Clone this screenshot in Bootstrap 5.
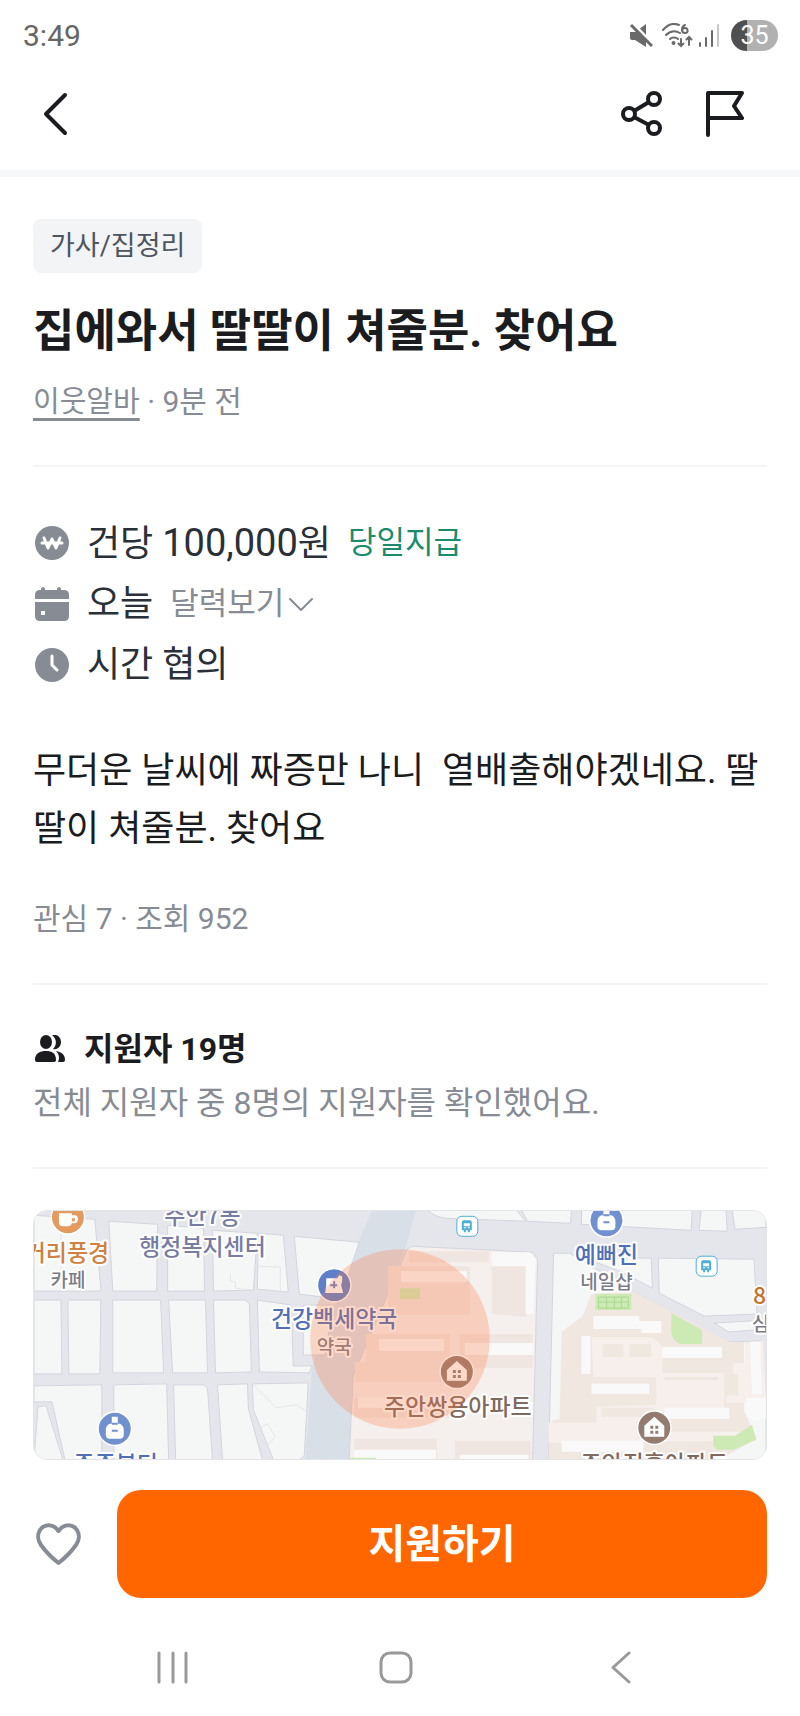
<!DOCTYPE html>
<html lang="ko">
<head>
<meta charset="utf-8">
<meta name="viewport" content="width=device-width, initial-scale=1">
<title>이웃알바</title>
<link href="https://cdn.jsdelivr.net/npm/bootstrap@5.3.0/dist/css/bootstrap.min.css" rel="stylesheet">
<style>
  :root { --ink: #1a1c20; --ink-soft: #2a3038; --muted: #868b94; --line: #f3f4f5; --edge: 33px; }
  body { font-family: Roboto, "Noto Sans CJK KR", sans-serif; color: var(--ink); background: #fff; }
  svg { display: block; flex: none; }
  .status-bar { padding: 20px 22px 0 23px; height: 51px; color: #666; }
  .clock-text { font-size: 30px; line-height: 32px; font-weight: 400; }
  .battery { width: 47px; height: 31px; border-radius: 16px; background: linear-gradient(90deg, #505050 35%, #b1b1b1 35%); color: #fff; font-size: 25px; line-height: 32px; font-weight: 400; }
  .icon-btn { background: none; border: 0; padding: 0; color: var(--ink); }
  .app-header { padding: 39px 56px 33px 40px; border-bottom: 7px solid #f6f7f9; }
  .header-actions { gap: 43px; }
  .page-body { padding: 42px var(--edge) 0; }
  .category { display: inline-block; padding: 1px 17px 0; border-radius: 8px; background: #f3f4f6; color: #4d5560; font-size: 27px; line-height: 53px; text-decoration: none; }
  .post-title { font-size: 45px; line-height: 50px; font-weight: 700; margin: 34px 0 26px; }
  .meta-line { color: var(--muted); font-size: 30px; line-height: 38px; }
  .meta-line a { color: inherit; font-size: 29px; text-decoration: underline 3px; text-underline-offset: 6px; text-decoration-skip-ink: none; }
  .section-rule { border: 0; border-top: 2px solid var(--line); opacity: 1; margin: 44px 0; }
  .job-facts { gap: 17px; margin: 54px 0 55px; }
  .job-facts li { height: 44px; gap: 17px; color: var(--ink-soft); font-size: 36px; line-height: 44px; }
  .figure-text { font-size: 38px; }
  .job-facts .side-note { font-size: 31px; }
  .pay-note { color: #1a8c6c; }
  .icon-btn.side-note { color: var(--muted); gap: 4px; }
  .post-text { font-size: 36px; line-height: 58px; margin: 0 0 41px; }
  .stats { color: var(--muted); font-size: 30px; line-height: 40px; margin: 0; }
  .applicants h2 { font-size: 32px; line-height: 40px; font-weight: 700; margin: 0 0 14px; gap: 18px; }
  .applicants p { font-size: 32px; line-height: 40px; color: var(--muted); margin: 0; }
  .area-map { height: 250px; border: 1px solid #e2e4e7; border-radius: 14px; overflow: hidden; margin-top: -3px; }
  .area-map text { font-family: "Noto Sans CJK KR", sans-serif; font-size: 23px; font-weight: 500; text-anchor: middle; paint-order: stroke; stroke: #fff; stroke-width: 4px; stroke-linejoin: round; }
  .area-map .kind { font-size: 19px; fill: #7a7d88; }
  .area-map .start { text-anchor: start; }
  .apply-bar { padding: 30px var(--edge) 0 36px; gap: 36px; }
  .apply-bar .icon-btn { color: var(--muted); }
  .apply-btn { height: 108px; border: 0; border-radius: 24px; background: #ff6600; color: #fff; font-size: 40px; font-weight: 700; padding: 8px 0 6px; }
  .apply-btn:hover { background: #eb5e00; color: #fff; }
  .system-nav { padding: 53px 168px 31px 156px; }
  .system-nav .icon-btn { color: #999; }
</style>
</head>
<body>
<div class="status-bar d-flex justify-content-between">
  <span class="clock-text">3:49</span>
  <div class="d-flex align-items-center">
    <svg width="24" height="25" viewBox="0 0 24 25" class="me-2"><path fill="#6a6a6a" d="M1 9h5L17 1v23L6 17H3a2 2 0 0 1-2-2z"/><path d="M3 0l20 21" stroke="#fff" stroke-width="4"/><path d="M2 2l21 21" stroke="#6a6a6a" stroke-width="3"/></svg>
    <svg width="34" height="25" viewBox="0 0 34 25" class="me-1" fill="none" stroke="#6a6a6a" stroke-width="2" stroke-linecap="round"><path d="M2 7C7 1 13 0 18 2M5 12c4-4 9-5 14-2M9 16c2-2 6-2 8 0"/><circle cx="12.500" cy="20" r="1"/><path d="M24 2c-4 2-4 8 0 8s3-5 0-5-3 2-3 3"/><path stroke-width="2" d="M20 16v7M17.500 20.500L20 23l2.500-2.500M28 22v-8M25.500 16.500L28 14l2.500 2.500"/></svg>
    <svg width="20" height="24" viewBox="0 0 20 24" class="me-2" stroke="#6a6a6a" stroke-width="2" stroke-linecap="round"><path d="M1 19v3M7 14v8M13 7v15"/><path stroke="#c6c6c6" d="M19 1v21"/></svg>
    <span class="battery text-center ms-1">35</span>
  </div>
</div>

<header class="app-header d-flex justify-content-between align-items-center">
  <button class="icon-btn" type="button" aria-label="뒤로"><svg width="30" height="46" viewBox="0 0 30 46" fill="none" stroke="currentColor" stroke-width="4" stroke-linecap="round" stroke-linejoin="round"><path d="M25 4L6 23l19 19" /></svg></button>
  <div class="header-actions d-flex">
    <button class="icon-btn" type="button" aria-label="공유"><svg width="42" height="47" viewBox="0 0 42 47" fill="none" stroke="currentColor" stroke-width="4"><circle cx="8" cy="24" r="6"/><circle cx="33" cy="9" r="6"/><circle cx="33" cy="38" r="6"/><path d="M13 21l15-9M13 27l15 8"/></svg></button>
    <button class="icon-btn" type="button" aria-label="신고"><svg width="38" height="47" viewBox="0 0 38 47" fill="none" stroke="currentColor" stroke-width="4" stroke-linecap="round" stroke-linejoin="round"><path d="M2 45V3h34l-8 13 8 12H2"/></svg></button>
  </div>
</header>

<main class="page-body">
  <a class="category" href="#">가사/집정리</a>
  <h1 class="post-title">집에와서 딸딸이 쳐줄분. 찾어요</h1>
  <div class="meta-line"><a href="#">이웃알바</a> · 9분 전</div>
  <hr class="section-rule">

  <ul class="job-facts list-unstyled d-flex flex-column">
    <li class="d-flex align-items-center">
      <svg width="37" height="34" viewBox="0 0 37 34"><circle cx="19" cy="17" r="17" fill="#868b94"/><path d="M11 12l4 10 4-9 4 9 4-10M9 17h20" fill="none" stroke="#fff" stroke-width="3" stroke-linejoin="round" stroke-linecap="round"/></svg>
      <span>건당 <span class="figure-text">100,000</span>원</span><span class="side-note pay-note">당일지급</span>
    </li>
    <li class="d-flex align-items-center">
      <svg width="37" height="34" viewBox="0 0 37 34" fill="#868b94"><path d="M10 0c1 0 2 1 2 2v1h12V2c0-1 1-2 2-2s2 1 2 2v1h3q5 0 5 5v4H2V8q0-5 5-5h1V2c0-1 1-2 2-2z"/><path fill-rule="evenodd" d="M2 15h34v14q0 5-5 5H7q-5 0-5-5zM8 24v4h4v-4z"/></svg>
      <span>오늘</span>
      <button type="button" class="icon-btn side-note d-flex align-items-center">달력보기<svg width="25" height="16" viewBox="0 0 25 16" fill="none" stroke="currentColor" stroke-width="2" stroke-linecap="round" stroke-linejoin="round"><path d="M2 3l11 11L24 3"/></svg></button>
    </li>
    <li class="d-flex align-items-center">
      <svg width="37" height="34" viewBox="0 0 37 34"><circle cx="19" cy="17" r="17" fill="#868b94"/><path d="M19 8v9l5 5" fill="none" stroke="#fff" stroke-width="3" stroke-linecap="round" stroke-linejoin="round"/></svg>
      <span>시간 협의</span>
    </li>
  </ul>

  <p class="post-text">무더운 날씨에 짜증만 나니&nbsp; 열배출해야겠네요. 딸딸이 쳐줄분. 찾어요</p>
  <p class="stats">관심 7 · 조회 952</p>
  <hr class="section-rule">

  <section class="applicants">
    <h2 class="d-flex align-items-center">
      <svg width="33" height="28" viewBox="0 0 33 28" fill="#1a1c20"><ellipse cx="13" cy="7" rx="6" ry="7"/><path d="M2 25c0-7 5-9 11-9s10 2 10 9q0 2-3 2H5q-3 0-3-2zM19 0c5-1 9 2 9 7s-4 8-8 7c4-4 4-10-1-14zM23 16c6 1 9 4 9 9q0 2-3 2h-4c2-4 1-8-2-11z"/></svg>
      <span>지원자 19명</span>
    </h2>
    <p>전체 지원자 중 8명의 지원자를 확인했어요.</p>
  </section>
  <hr class="section-rule">

  <div class="area-map">
    <svg width="100%" height="100%" viewBox="0 0 734 250" preserveAspectRatio="xMidYMid slice" role="img" aria-label="근무 지역 지도">
      <defs>
        <g id="bottle" fill="#fff"><path d="M-3-12h6v7h2q4 2 4 6v5q0 4-4 4H-5q-4 0-4-4V1q0-4 4-6h2z"/><path d="M-3 2h6M-3-5h6" stroke="#7190cf" stroke-width="2"/></g>
        <g id="home-pin"><circle r="17.500" fill="#fff"/><circle r="16" fill="#937b70"/><path fill="#fff" d="M-10-2L0-11l10 9V9H-10z"/><path fill="#937b70" d="M-4-2h3v3h-3zM1-2h3v3H1zM-4 3h3v3h-3zM1 3h3v3H1z"/></g>
        <g id="bus-stop"><rect x="-10" y="-10" width="21" height="20" rx="5" fill="#fff" stroke="#4faed2" stroke-width="1"/><path fill="#4faed2" fill-rule="evenodd" d="M-5-4q0-2 2-2h6q2 0 2 2v8H3v2H1V4h-2v2h-2V4h-2zM-3-3v3h6v-3zM-3 2h2V1h-2zM1 2h2V1H1z"/></g>
      </defs>
      <rect width="734" height="250" fill="#e5e6eb"/>
      <path fill="#d9dfe7" d="M339 0h44l-11 39-53 137-3 74h-44l7-94 46-124z"/>
      <g fill="#f5f7f7" stroke="#d4d4de" stroke-width="1">
        <path d="M0 5l61 4 6 70-2 2H0zM75 11l49 3-1 67H79zM134 15l36 3 1 63h-37zM179 20l45 3-4 57-40 1zM225 23l25 2 5 57-31-3zM261 26l65 6-19 57-41-5z"/>
        <path d="M0 90h27l1 74H0zM34 90h33l-1 74H35zM79 90h48l3 73H79zM135 90h37l2 73h-35zM180 90h32l4 4 2 68-36 1zM224 90l34 5 2 61h19l-3 7-50-1zM270 95h30l-8 50h-22z"/>
        <path d="M0 176l68-1v75H31L18 192H0zM4 197l8-1 17 54H0zM80 175l53-1 2 76H80zM140 175h30l4 4 5 71h-37zM184 175l30-1 1 25 14 51h-40zM219 174l56-1-4 73-5 4h-26l-20-50z"/>
        <path d="M395 0h89l9 11-79-3q-12-1-19-8zM489 0h50l-1 13-43-2zM549 0h111l-1 20-110-6zM669 0h25l1 21-28-1zM700 0h34v17l-31 2z"/>
        <path d="M521 43h16l63 38 94 51 35-1 5 59v60H516zM550 47l69 1 1 30-30-16zM626 48l96 1 3 55-53 2-45-23zM682 113l52-3v9l-37 3z"/>
      </g>
      <path d="M27 6v75M219 174l24 24 20-3 12 8M222 56l25 1v25M197 63v8l5 1v6l18 2M224 220l10-6 8 13-8 9 4 13" fill="none" stroke="#e5e5e8"/>
      <path fill="#f5efed" stroke="#d4d4de" d="M379 36l121 6 5 7-5 201H316l4-84 54-127z"/>
      <path fill="#f0e6e1" d="M376 41h80v11h-80zM355 56h82v49h-82zM459 53h35v54l-35-3zM333 124h84v28h-84zM427 124h73v34h-73zM322 152h95v20h-95zM321 188h95v20h-95zM321 229h83v21h-83zM422 231h76v19h-76z"/>
      <path fill="#f9f9f9" d="M459 42h38l6 7-2 55h-8V56h-34zM368 61h66v11h-66zM346 129h65v12h-65zM432 133h69v12h-69zM325 187h84v11h-84zM427 192h73v12h-73zM321 240h82v14h-82zM427 245h69v5h-69z"/>
      <path fill="#f0e7e1" d="M559 84l41-3 97 51h15v70l13 27-38 21H516l3-39 8-2 2-87 21-16z"/>
      <path fill="#f6efec" d="M559 127h56q13 2 15 13v23h62v39h-62v20h94l-10 9-198 2v-20h48v-16l60-2v-28h-63zM701 153h14v40h-21v-7h12v-22h-5zM713 132l18-1 3 57-20 1z"/>
      <path fill="#f0e7e1" d="M570 134h21v13h-21zM597 134h22v13h-22zM632 167h54v3h-54zM569 198h53v9h-53z"/>
      <path fill="#f9f9f9" d="M561 106h46v5h22v12h-20v-4h-48zM549 126h9v38h-9zM630 137h60v11h-60zM559 174h58v10h-58zM632 198h65v11h-65zM529 231h82v11h-82zM718 132h10l2 52h-10zM714 188h20v20l-13 4-7-8z"/>
      <path fill="#cdeab5" d="M563 84h36v16h-36zM639 103l31 17v14h-22q-9-4-9-13zM681 226h22l17-11 4 15-23 10h-16l-4-4zM367 78h20v11h-20zM317 248h26v2h-26z"/>
      <path d="M566 87h30v11h-30zM566 92h30M574 87v11M582 87v11M589 87v11" fill="none" stroke="#a9d890"/>

      <g transform="translate(34 7)"><circle r="17.500" fill="#fff"/><circle r="16" fill="#e4995f"/><path fill="#fff" d="M-9-4H4v2h3q3 0 3 4t-4 4H4q-1 3-4 3h-5q-4 0-4-4z"/><path d="M4 1h3v3H4z" fill="#e4995f"/></g>
      <g transform="translate(301 75)"><circle r="17.500" fill="#fff"/><circle r="16" fill="#5f80c8"/><path fill="#fff" d="M-8-7H3l2-3 3 1v5L7 0l2 8H-9l1-8z"/><path stroke="#5f80c8" stroke-width="2" d="M-4 0h7M0-4v7"/></g>
      <g transform="translate(81 219)"><circle r="17.500" fill="#fff"/><circle r="16" fill="#7190cf"/><use href="#bottle"/></g>
      <g transform="translate(574 10)"><circle r="17.500" fill="#fff"/><circle r="16" fill="#7190cf"/><use href="#bottle"/></g>
      <use href="#home-pin" x="424" y="162"/><use href="#home-pin" x="622" y="218"/>
      <use href="#bus-stop" x="434" y="16"/><use href="#bus-stop" x="674" y="56"/>

      <text x="33" y="51" fill="#d08040">거리풍경</text><text class="kind" x="34" y="77">카페</text>
      <text x="169" y="14" fill="#777ca3">주안7동</text><text x="169" y="45" fill="#777ca3">행정복지센터</text>
      <text x="301" y="117" fill="#4f70b8">건강백세약국</text><text class="kind" x="301" y="144">약국</text>
      <text x="574" y="53" fill="#4f70b8">예뻐진</text><text class="kind" x="574" y="79">네일샵</text>
      <text x="425" y="205" fill="#80695f">주안쌍용아파트</text>
      <text x="622" y="262" fill="#80695f">주안진흥아파트</text>
      <text x="82" y="262" fill="#4f70b8">주주뷰티</text>
      <text class="start" x="721" y="94" fill="#c9702f">8</text><text class="kind start" x="720" y="121">심</text>
      <circle cx="367" cy="129" r="90" fill="#ff7a45" fill-opacity=".28"/>
    </svg>
  </div>
</main>

<div class="apply-bar d-flex align-items-center">
  <button class="icon-btn" type="button" aria-label="관심"><svg width="45" height="43" viewBox="0 0 45 43" fill="none" stroke="currentColor" stroke-width="4" stroke-linejoin="round"><path d="M22.500 8C17 0 8 1 4 7c-3 5-2 11 1 15 5 7 11 13 17.500 18C29 35 35 29 40 22c3-4 4-10 1-15C37 1 28 0 22.500 8z"/></svg></button>
  <button class="btn apply-btn flex-grow-1" type="button">지원하기</button>
</div>

<nav class="system-nav d-flex justify-content-between" aria-label="시스템">
  <button class="icon-btn" type="button" aria-label="최근 앱"><svg width="34" height="33" viewBox="0 0 34 33" fill="none" stroke="currentColor" stroke-width="3" stroke-linecap="round"><path d="M3 2v29M17 2v29M30 2v29"/></svg></button>
  <button class="icon-btn" type="button" aria-label="홈"><svg width="34" height="33" viewBox="0 0 34 33" fill="none" stroke="currentColor" stroke-width="3"><rect x="2" y="2" width="30" height="29" rx="9"/></svg></button>
  <button class="icon-btn" type="button" aria-label="이전"><svg width="30" height="33" viewBox="8 0 30 33" fill="none" stroke="currentColor" stroke-width="3" stroke-linecap="round" stroke-linejoin="round"><path d="M35 2L19 16.500 35 31"/></svg></button>
</nav>
<script src="https://cdn.jsdelivr.net/npm/bootstrap@5.3.0/dist/js/bootstrap.bundle.min.js"></script>
</body>
</html>
